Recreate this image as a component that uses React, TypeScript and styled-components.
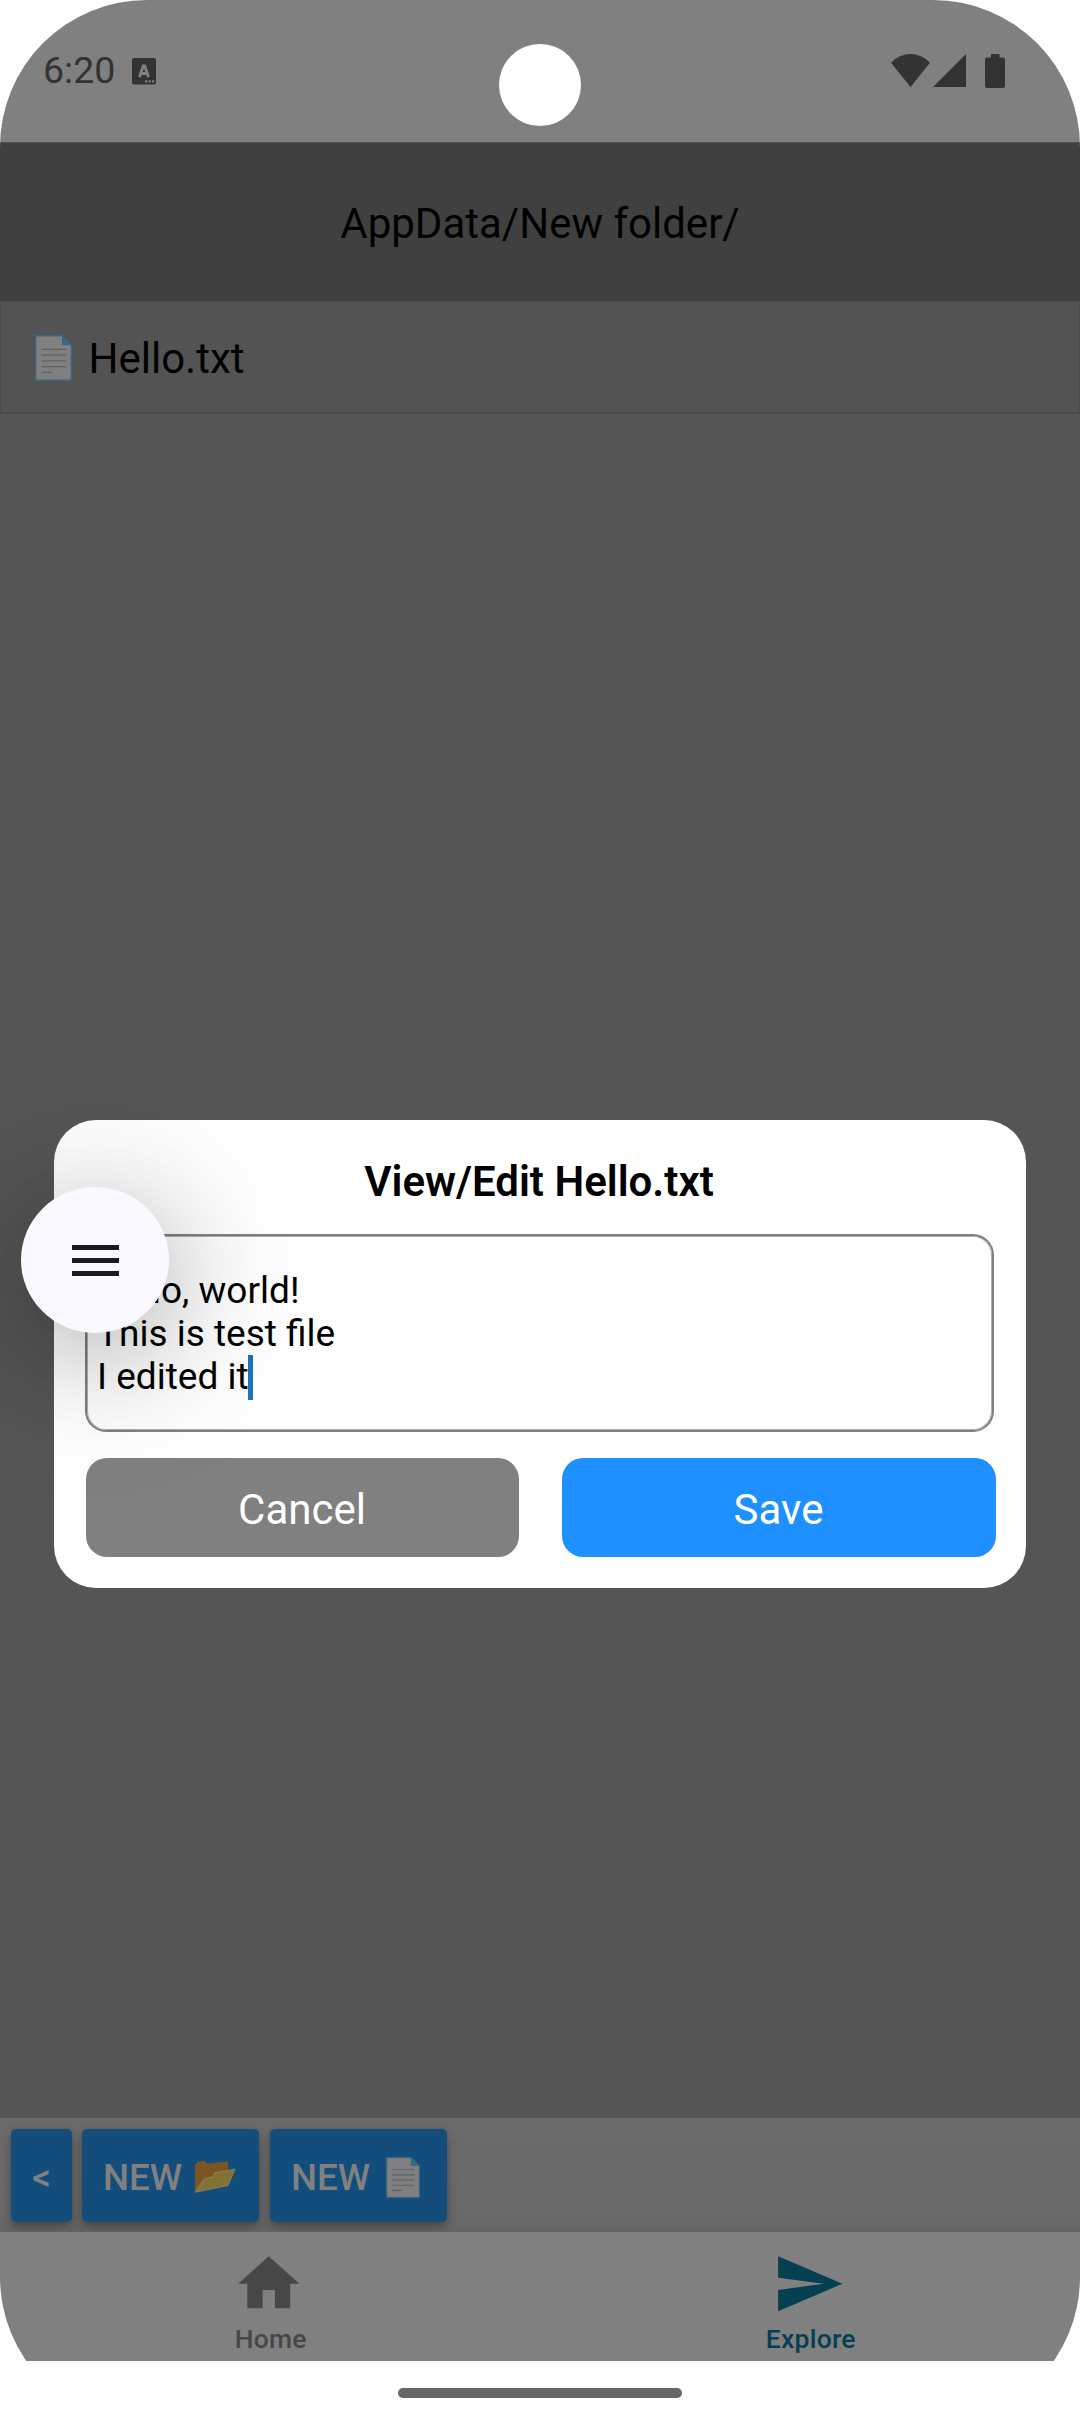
import React from "react";
import styled, { createGlobalStyle } from "styled-components";

const GlobalStyle = createGlobalStyle`
  * { box-sizing: border-box; }
  body { margin: 0; background: #fff; font-family: Roboto, sans-serif; }
`;

const Screen = styled.div`
  position: relative;
  display: flex;
  flex-direction: column;
  width: 1080px;
  height: 2424px;
  overflow: hidden;
  border-radius: 147px;
  background: #fff;
  color: #000;
`;

const StatusBar = styled.header`
  display: flex;
  align-items: flex-start;
  justify-content: space-between;
  height: 142px;
  padding: 0 75px 0 43px;
  background: #808080;
`;

const StatusGroup = styled.div`
  display: flex;
  align-items: flex-start;
  padding-top: 54px;
`;

const Clock = styled.span`
  width: 72px;
  margin: -6px 17px 0 0;
  font-size: 37.5px;
  line-height: 45px;
  color: #333;
`;

const Glyph = styled.svg<{ $w: number; $h: number; $ml?: number; $mt?: number }>`
  display: block;
  flex: none;
  width: ${(p) => p.$w}px;
  height: ${(p) => p.$h}px;
  margin-left: ${(p) => p.$ml ?? 0}px;
  margin-top: ${(p) => p.$mt ?? 0}px;
`;

const Camera = styled.div`
  position: absolute;
  top: 44px;
  left: 499px;
  width: 82px;
  height: 82px;
  border-radius: 50%;
  background: #fff;
`;

const PathHeader = styled.div`
  display: flex;
  align-items: center;
  justify-content: center;
  height: 159px;
  padding-top: 4px;
  border-top: 1px solid #525252;
  background: #404040;
  font-size: 42px;
  line-height: 50px;
`;

const FileRow = styled.div`
  display: flex;
  align-items: center;
  height: 113px;
  padding: 2px 0 0 33.5px;
  border: 1px solid #4a4a4a;
  border-bottom-width: 2px;
  background: #535353;
`;

const FileName = styled.span`
  margin-left: 17px;
  padding-top: 2px;
  font-size: 42px;
  line-height: 50px;
`;

const EmptyArea = styled.main`
  flex: 1;
  background: #555;
`;

const Toolbar = styled.div`
  display: flex;
  height: 114px;
  padding: 11px 11px 0;
  overflow: hidden;
  border-bottom: 1px solid #626262;
  background: linear-gradient(#6b6b6b, #696969 85%, #666);
`;

const ToolButton = styled.button<{ $w: number; $ml?: number }>`
  display: flex;
  align-items: center;
  justify-content: center;
  width: ${(p) => p.$w}px;
  height: 93px;
  margin-left: ${(p) => p.$ml ?? 0}px;
  padding: 3px 0 0;
  border: 0;
  border-radius: 5px;
  background: #124d7b;
  box-shadow: 0 7px 12px rgba(0, 0, 0, 0.26), 0 0 5px rgba(0, 0, 0, 0.1);
  color: #808080;
  font: 500 36.75px/43px Roboto, sans-serif;
`;

const ToolLabel = styled.span<{ $shift: number }>`
  margin-left: ${(p) => -p.$shift}px;
`;

const TabBar = styled.nav`
  display: grid;
  grid-template-columns: 1fr 1fr;
  height: 129px;
  background: #808080;
`;

const Tab = styled.div<{ $color: string }>`
  display: flex;
  flex-direction: column;
  align-items: center;
  padding-top: 15px;
  color: ${(p) => p.$color};
  font-size: 26.5px;
  font-weight: 500;
  line-height: 31px;
`;

const TabIcon = styled(Glyph)`
  margin-left: -2px;
`;

const TabLabel = styled.span`
  margin-top: 2.5px;
  padding-left: 1.5px;
  letter-spacing: 0.25px;
`;

const GestureArea = styled.footer`
  display: flex;
  justify-content: center;
  height: 63px;
  padding-top: 27px;
  background: #fff;
`;

const GesturePill = styled.div`
  width: 284px;
  height: 10px;
  border-radius: 5px;
  background: #666;
`;

const Overlay = styled.div`
  position: absolute;
  inset: 0;
  display: flex;
  align-items: flex-start;
  justify-content: center;
  padding-top: 1120px;
`;

const Dialog = styled.section`
  width: 972px;
  height: 468px;
  padding: 37px 30px 31px 31px;
  border-radius: 42px;
  background: #fff;
`;

const DialogTitle = styled.h1`
  margin: 0;
  padding-right: 3px;
  font-size: 42px;
  font-weight: 600;
  line-height: 50px;
  text-align: center;
`;

const Editor = styled.div`
  width: 909px;
  height: 198px;
  margin-top: 27px;
  padding: 33px 10px 0 10px;
  border: 2px solid #808080;
  border-radius: 21px;
  background: #fefefe;
  box-shadow: inset 0 0 0 1px #adadad;
  font-size: 37px;
  line-height: 43px;
  white-space: pre-line;
`;

const Caret = styled.span`
  display: inline-block;
  width: 5px;
  height: 45px;
  margin: -5px 0 0 -1px;
  vertical-align: -11px;
  background: #1b75b9;
`;

const Actions = styled.div`
  display: flex;
  justify-content: space-between;
  margin: 26px 0 0 1px;
`;

const ActionButton = styled.button<{ $bg: string; $w: number }>`
  width: ${(p) => p.$w}px;
  height: 99px;
  padding: 5px 1px 0 0;
  border: 0;
  border-radius: 21px;
  background: ${(p) => p.$bg};
  color: #fff;
  font: 400 42px/50px Roboto, sans-serif;
`;

const FloatingMenu = styled.button`
  position: absolute;
  top: 1187px;
  left: 21px;
  display: flex;
  flex-direction: column;
  align-items: center;
  gap: 8px;
  width: 148px;
  height: 146px;
  padding: 58px 0 0 1px;
  border: 0;
  border-radius: 50%;
  background: #f9f9ff;
  box-shadow: 0 24px 90px rgba(0, 0, 0, 0.18), 0 16px 150px 30px rgba(0, 0, 0, 0.13);
`;

const MenuLine = styled.span`
  width: 47px;
  height: 5px;
  background: #191b23;
`;

const DocumentIcon = ({ w, h, ml }: { w: number; h: number; ml?: number }) => (
  <Glyph $w={w} $h={h} $ml={ml} viewBox="0 0 37 45" preserveAspectRatio="none">
    <path d="M.7.7H27L36.3 10V44.3H.7Z" fill="#808080" stroke="#3c6680" strokeWidth="1.3" />
    <path d="M27 .5V10H36.5Z" fill="#3c6680" />
    <path d="M6.5 14H31M6.5 19.7H31M6.5 25.3H31M6.5 31H31M6.5 36.6H17.5" stroke="#596166" strokeWidth="1.3" />
  </Glyph>
);

const FolderIcon = () => (
  <Glyph $w={41} $h={32} $ml={13} viewBox="0 0 41 32">
    <path d="M0 31V4Q0 3 1 2.7L3 1Q3.500 .6 5 .6L9.500 0Q11 0 11.500 2.600L32 .6Q33 .6 33 2V12L1.500 31Z" fill="#7c5523" />
    <path d="M.8 31.200L10 17.600 18 15.800 19.500 11.800 40 8.200 33 24.500Z" fill="#837238" stroke="#90864f" strokeWidth=".9" strokeLinejoin="round" />
    <path d="M0 31.800L.5 29.500 9 17.200" fill="none" stroke="#857b52" strokeWidth=".7" />
  </Glyph>
);

export default function App() {
  return (
    <>
      <GlobalStyle />
      <Screen>
        <StatusBar>
          <StatusGroup>
            <Clock>6:20</Clock>
            <Glyph $w={24} $h={27} $mt={4} viewBox="0 0 24 27">
              <rect width="24" height="26.500" rx="2" fill="#333" />
              <path d="M7.500 19L11.300 8H12.700L16.500 19M9 15.500H15" fill="none" stroke="#808080" strokeWidth="3" />
              <path d="M13 23.300h2.200m1.300 0h2.200m1.300 0h2.200" stroke="#808080" strokeWidth="2.200" />
            </Glyph>
          </StatusGroup>
          <StatusGroup>
            <Glyph $w={39} $h={33} viewBox="0 0 39 33">
              <path d="M0 8.700Q8.500 0 19.500 0T39 8.700L19.500 33Z" fill="#333" />
            </Glyph>
            <Glyph $w={33} $h={33} $ml={3} viewBox="0 0 33 33">
              <path d="M33 0V33H0Z" fill="#333" />
            </Glyph>
            <Glyph $w={20} $h={34} $ml={19} viewBox="0 0 20 34">
              <path d="M6 0H14.500V3.500H18Q20 3.500 20 5.500V32Q20 34 18 34H2Q0 34 0 32V5.500Q0 3.500 2 3.500H6Z" fill="#333" />
            </Glyph>
          </StatusGroup>
        </StatusBar>
        <PathHeader>AppData/New folder/</PathHeader>
        <FileRow>
          <DocumentIcon w={37} h={46} />
          <FileName>Hello.txt</FileName>
        </FileRow>
        <EmptyArea />
        <Toolbar>
          <ToolButton $w={61}>&lt;</ToolButton>
          <ToolButton $w={177} $ml={10}>
            <ToolLabel $shift={2}>NEW</ToolLabel>
            <FolderIcon />
          </ToolButton>
          <ToolButton $w={177} $ml={11}>
            <ToolLabel $shift={6}>NEW</ToolLabel>
            <DocumentIcon w={34} h={41} ml={16} />
          </ToolButton>
        </Toolbar>
        <TabBar>
          <Tab $color="#474747">
            <TabIcon $w={73.5} $h={73.5} viewBox="0 0 24 24">
              <path d="M10 20v-6h4v6h5v-8h3L12 3 2 12h3v8z" fill="currentColor" />
            </TabIcon>
            <TabLabel>Home</TabLabel>
          </Tab>
          <Tab $color="#053f52">
            <TabIcon $w={73.5} $h={73.5} viewBox="0 0 24 24">
              <path d="M2 21l21-9L2 3v7l15 2-15 2z" fill="currentColor" />
            </TabIcon>
            <TabLabel>Explore</TabLabel>
          </Tab>
        </TabBar>
        <GestureArea>
          <GesturePill />
        </GestureArea>

        <Camera />
        <Overlay>
          <Dialog>
            <DialogTitle>View/Edit Hello.txt</DialogTitle>
            <Editor>
              {"Hello, world!\nThis is test file\nI edited it"}
              <Caret />
            </Editor>
            <Actions>
              <ActionButton $bg="#808080" $w={433}>Cancel</ActionButton>
              <ActionButton $bg="#1e90ff" $w={434}>Save</ActionButton>
            </Actions>
          </Dialog>
        </Overlay>
        <FloatingMenu aria-label="Menu">
          <MenuLine />
          <MenuLine />
          <MenuLine />
        </FloatingMenu>
      </Screen>
    </>
  );
}
